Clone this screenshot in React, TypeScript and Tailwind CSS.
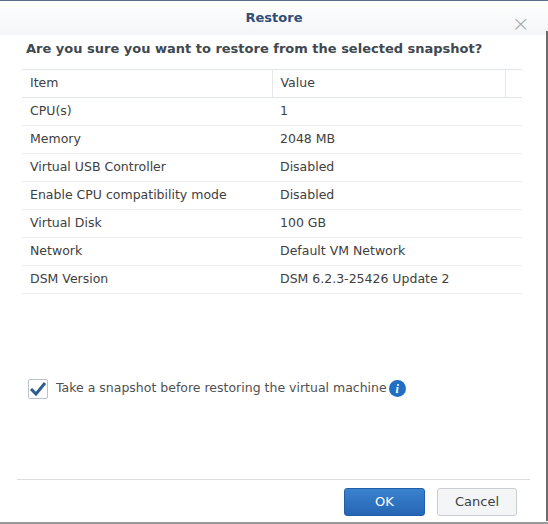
const rows: [string, string][] = [
  ["CPU(s)", "1"],
  ["Memory", "2048 MB"],
  ["Virtual USB Controller", "Disabled"],
  ["Enable CPU compatibility mode", "Disabled"],
  ["Virtual Disk", "100 GB"],
  ["Network", "Default VM Network"],
  ["DSM Version", "DSM 6.2.3-25426 Update 2"],
];

export default function App() {
  return (
    <div
      className="relative h-[524px] w-[548px] bg-white border-t border-[#5b6f86] border-b-2 border-b-[#9a9a9a] text-[12.5px] text-[#404040]"
      style={{ fontFamily: '"DejaVu Sans", Verdana, sans-serif' }}
    >
      <div className="flex h-[34px] items-center justify-center bg-gradient-to-b from-white to-[#f3f5f7]">
        <span className="text-[13px] font-bold text-[#2f4e7a]">Restore</span>
        <span className="absolute right-[18px] top-[6px] text-[22px] font-light text-[#a8a8a8]">×</span>
      </div>
      <div className="absolute right-0 top-[30px] h-[490px] w-[2px] bg-[#6b6b6b]" />
      <div className="px-[22px]">
        <p className="mt-[4px] pl-[4px] text-[13px] font-bold text-[#404850]">Are you sure you want to restore from the selected snapshot?</p>
        <table className="mt-[10px] w-[500px] border-collapse">
          <thead>
            <tr className="h-[28px] border-t border-b border-[#dfe4e9] text-left">
              <th className="w-[250px] border-r border-[#e5e8eb] pl-[8px] font-normal">Item</th>
              <th className="w-[233px] border-r border-[#e5e8eb] pl-[8px] font-normal">Value</th>
              <th />
            </tr>
          </thead>
          <tbody>
            {rows.map(([k, v]) => (
              <tr key={k} className="h-[28px] border-b border-[#eceef0]">
                <td className="pl-[8px]">{k}</td>
                <td className="pl-[8px]" colSpan={2}>{v}</td>
              </tr>
            ))}
          </tbody>
        </table>
        <div className="mt-[85px] ml-[6px] flex items-center gap-[8px]">
          <div className="flex h-[20px] w-[20px] items-center justify-center rounded-[2px] border border-[#b9c3cc] bg-white">
            <svg width="18" height="16" viewBox="0 0 18 16">
              <path d="M2 8 L7 13 L16 2" fill="none" stroke="#2e5c93" strokeWidth="3" />
            </svg>
          </div>
          <span className="text-[#505050]">Take a snapshot before restoring the virtual machine</span>
          <span className="-ml-[6px] flex h-[17px] w-[17px] items-center justify-center rounded-full bg-[#1f6fc4] text-[12px] font-bold italic text-white" style={{ fontFamily: '"Liberation Serif", serif' }}>i</span>
        </div>
      </div>
      <div className="absolute left-[17px] right-[18px] top-[478px] border-t border-[#dcdcdc]" />
      <div className="absolute right-[31px] top-[487px] flex gap-[12px]">
        <button className="h-[28px] w-[81px] rounded-[3px] border border-[#1f5ea8] bg-gradient-to-b from-[#3b82cf] to-[#2566b4] text-[13px] text-white">OK</button>
        <button className="h-[28px] w-[80px] rounded-[3px] border border-[#c8ced4] bg-[#f3f5f7] text-[13px] text-[#404040]">Cancel</button>
      </div>
    </div>
  );
}
